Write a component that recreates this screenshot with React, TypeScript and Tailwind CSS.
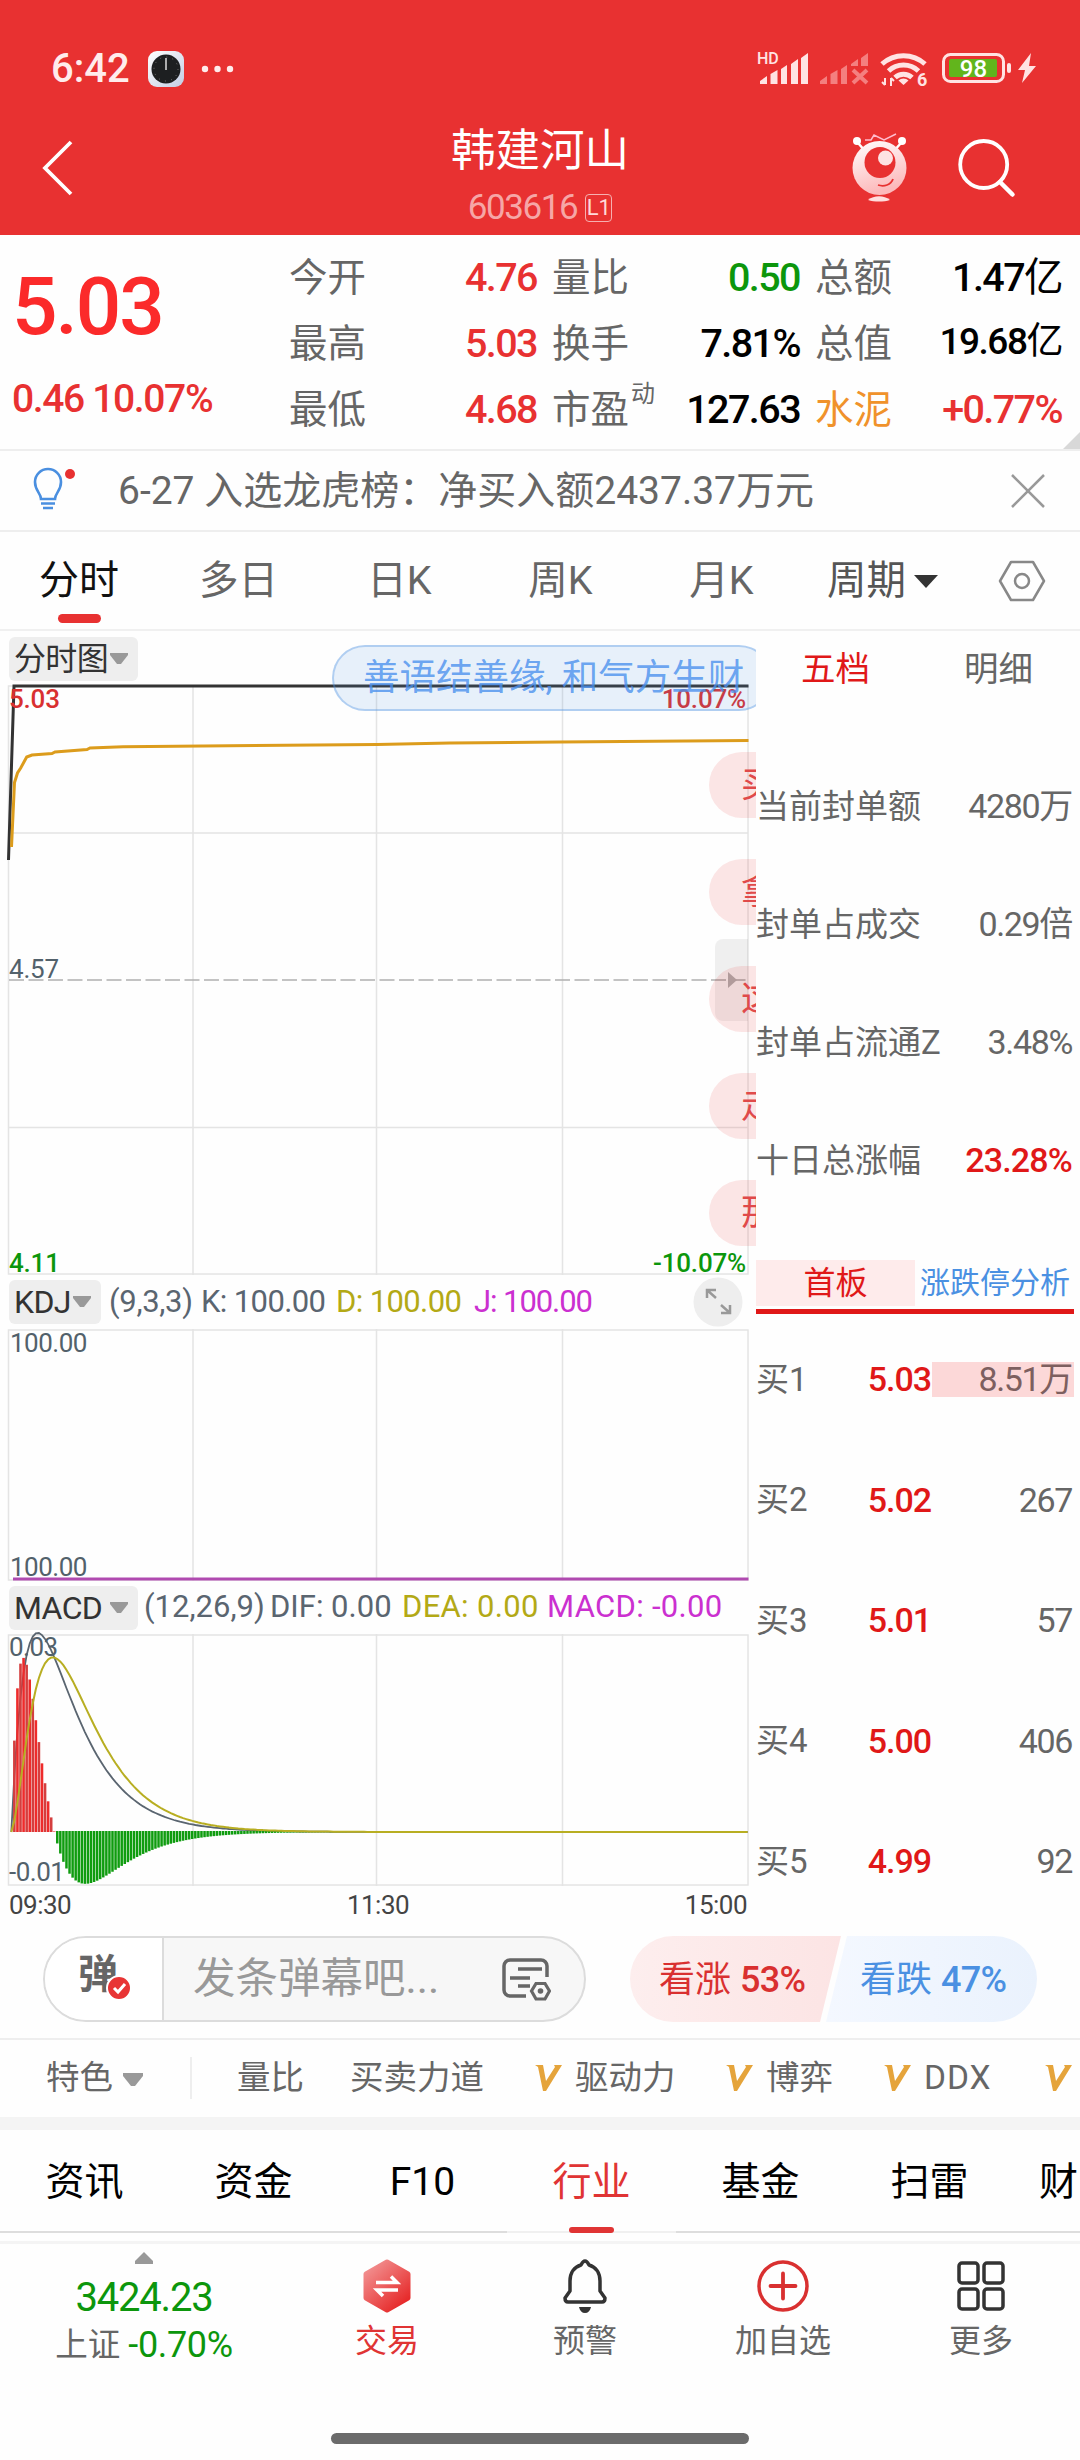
import type { ReactNode } from 'react';

const GREY = '#5a6570';
const OLIVE = '#b3a916';
const MAGENTA = '#cb30d0';

const quoteRows = [
  [
    { label: '今开', value: '4.76', color: 'text-[#e83131]' },
    { label: '量比', value: '0.50', color: 'text-[#0c960c]' },
    { label: '总额', value: '1.47亿', color: 'text-black' },
  ],
  [
    { label: '最高', value: '5.03', color: 'text-[#e83131]' },
    { label: '换手', value: '7.81%', color: 'text-black' },
    { label: '总值', value: '19.68亿', color: 'text-black', small: true },
  ],
  [
    { label: '最低', value: '4.68', color: 'text-[#e83131]' },
    { label: '市盈', sup: '动', value: '127.63', color: 'text-black' },
    { label: '水泥', value: '+0.77%', color: 'text-[#e83131]', accent: true },
  ],
];

const sealRows = [
  { label: '当前封单额', value: '4280万' },
  { label: '封单占成交', value: '0.29倍' },
  { label: '封单占流通Z', value: '3.48%' },
  { label: '十日总涨幅', value: '23.28%', hot: true },
];

const bids = [
  { label: '买1', price: '5.03', volume: '8.51万', filled: true },
  { label: '买2', price: '5.02', volume: '267' },
  { label: '买3', price: '5.01', volume: '57' },
  { label: '买4', price: '5.00', volume: '406' },
  { label: '买5', price: '4.99', volume: '92' },
];

const infoTabs = ['资讯', '资金', 'F10', '行业', '基金', '扫雷'];
const bubbles = ['买', '拿', '这', '走', '那'];

// One jump at the open, flat at the limit price afterwards
const macd = (() => {
  const out: { dif: number; dea: number; bar: number }[] = [];
  let dea = 0;
  for (let n = 0; n < 241; n++) {
    const dif = Math.pow(25 / 27, n) - Math.pow(11 / 13, n);
    dea = n === 0 ? 0 : dea * 0.8 + dif * 0.2;
    out.push({ dif, dea, bar: 2 * (dif - dea) });
  }
  return out;
})();

const barX = (n: number) => 11.3 + n * 3.068;
const macdLine = (key: 'dif' | 'dea') =>
  macd.map((m, n) => `${barX(n).toFixed(1)},${(198 - m[key] * 716).toFixed(1)}`).join(' ');

function StatusBar() {
  return (
    <div className="flex h-[110px] items-start justify-between pl-[51px] pr-5">
      <div className="flex items-center pt-[49px] text-[#ffecec]">
        <span className="w-[97px] text-[40px] leading-10 font-medium">6:42</span>
        <svg width="90" height="40" viewBox="0 0 90 40">
          <defs>
            <linearGradient id="clock" x1="0" y1="0" x2="1" y2="1">
              <stop offset="0" stopColor="#fff" />
              <stop offset="1" stopColor="#c3cde4" />
            </linearGradient>
          </defs>
          <rect x="0" y="2" width="36" height="36" rx="9" fill="url(#clock)" />
          <circle cx="18" cy="20" r="14.5" fill="#1d1f21" />
          <circle cx="18" cy="20" r="12" fill="none" stroke="#777" strokeWidth="1" strokeDasharray="1 5.28" />
          <path d="M18 9v12" stroke="#ddd" strokeWidth="1.5" />
          <circle cx="57" cy="20" r="3.2" fill="#ffecec" />
          <circle cx="69.500" cy="20" r="3.2" fill="#ffecec" />
          <circle cx="82" cy="20" r="3.2" fill="#ffecec" />
        </svg>
      </div>
      <svg width="320" height="60" viewBox="0 0 320 60" className="mt-10" fill="#ffe3e3">
        <text x="17" y="24" fontSize="16" fontWeight="500">HD</text>
        <path d="M20 44v-3l7-5v8zM30.500 44v-10l7-4v14zM41 44v-15l6-4v19zM51 44v-20l7-5v25zM61 44v-26l7-5v31z" />
        <g fill="#f47f7f">
          <path d="M80 44v-3l7-5v8zM90.500 44v-10l7-4v14zM101 44v-15l6-4v19zM111 26v-2l7-5v7zM121 26v-8l7-5v13z" />
          <path d="M113 30l14 13M127 30l-14 13" stroke="#f47f7f" strokeWidth="4" />
        </g>
        <g fill="none" stroke="#ffe3e3" strokeWidth="5">
          <path d="M142 24a32 32 0 0 1 43 0" />
          <path d="M148.500 31a22 22 0 0 1 30 0" />
          <path d="M155 37.500a12.500 12.500 0 0 1 17 0" />
        </g>
        <path d="M158.500 40.500a7 7 0 0 1 10 0l-5 4.500z" />
        <path d="M145 38v7m-3-3l3 3M151 46v-8m3 3l-3-3" stroke="#ffe3e3" strokeWidth="2" fill="none" />
        <text x="177" y="46" fontSize="18" fontWeight="700">6</text>
        <rect x="203.500" y="14.500" width="60" height="27" rx="7" fill="none" stroke="#ffe3e3" strokeWidth="3" />
        <rect x="209" y="19" width="48" height="18" rx="2" fill="#62b51c" />
        <text x="233.500" y="37" fontSize="24" fontWeight="500" textAnchor="middle" fill="#fff">98</text>
        <rect x="267" y="23" width="4" height="10" rx="2" />
        <path d="M291 13l-13 17h7l-3 13 14-17h-7z" />
      </svg>
    </div>
  );
}

function Header() {
  return (
    <header className="h-[235px] bg-[#e83131] text-white">
      <StatusBar />
      <div className="grid h-[125px] grid-cols-[1fr_auto_1fr] items-start">
        <svg width="40" height="64" viewBox="0 0 40 64" className="ml-[39px] mt-[26px]">
          <path d="M32 6L6 32l26 26" fill="none" stroke="#fff" strokeWidth="3.800" />
        </svg>
        <div className="flex flex-col items-center">
          <h1 className="mt-[17px] text-[44.500px] leading-[48px]">韩建河山</h1>
          <div className="mt-[15px] flex items-center gap-2 text-[#f6a6a6]">
            <span className="text-[35px] leading-9 tracking-[-0.04em]">603616</span>
            <span className="flex h-[28px] w-[27px] items-center justify-center rounded-sm border border-[#f6b0b0] text-[22px] leading-none text-[#ffdada]">
              L1
            </span>
          </div>
        </div>
        <div className="flex justify-end">
          <svg width="180" height="90" viewBox="850 130 180 90" className="mr-[50px] mt-[20px]">
            <defs>
              <linearGradient id="bot" x1="0" y1="0" x2="0.300" y2="1">
                <stop offset="0" stopColor="#fff" />
                <stop offset="1" stopColor="#fcb9bb" />
              </linearGradient>
            </defs>
            <g stroke="#fff" fill="none">
              <path d="M858 143l8 9M901 143l-8 9" strokeWidth="2.500" />
              <path d="M865 140h6l3-5 10 5 12-6" strokeWidth="1.500" stroke="#fbc" />
            </g>
            <circle cx="857" cy="141" r="4" fill="#fff" />
            <circle cx="902" cy="141" r="4" fill="#fff" />
            <circle cx="879.500" cy="168" r="27" fill="url(#bot)" />
            <circle cx="880" cy="162.500" r="15.500" fill="#e83131" />
            <circle cx="885.500" cy="158" r="7.500" fill="#fde3e3" />
            <path d="M878 185c6 2 13 0 15-6" fill="none" stroke="#e83131" strokeWidth="1.800" />
            <path d="M868 200c6-5 16-5 22 0-6 2-16 2-22 0z" fill="#fdd" />
            <circle cx="983.700" cy="164.500" r="23.500" fill="none" stroke="#fff" strokeWidth="3.800" />
            <path d="M1000 182l12.500 12.500" stroke="#fff" strokeWidth="4.500" strokeLinecap="round" />
          </svg>
        </div>
      </div>
    </header>
  );
}

function Quote() {
  return (
    <section className="relative flex h-[216px] border-b-2 border-[#eee]">
      <div className="w-[289px] shrink-0 pl-3">
        <p className="mt-[32px] text-[80px] leading-[80px] font-medium tracking-[-0.025em] text-[#fb2a2a]">5.03</p>
        <p className="mt-[32px] text-[39px] leading-10 font-medium tracking-[-0.035em] text-[#e83131]">0.46 10.07%</p>
      </div>
      <div className="mt-[10px] flex flex-col">
        {quoteRows.map((row, i) => (
          <div key={i} className="grid h-[66px] grid-cols-[248px_248px_247px] items-center gap-x-[15px]">
            {row.map((cell) => (
              <div key={cell.label} className="flex items-center justify-between">
                <span
                  className={`relative text-[38.500px] leading-[66px] ${cell.accent ? 'text-[#f0922b]' : 'text-[#666]'}`}
                >
                  {cell.label}
                  {cell.sup && (
                    <span className="absolute left-[79px] top-[5px] text-[24px] leading-6">{cell.sup}</span>
                  )}
                </span>
                <span
                  className={`font-medium tracking-[-0.04em] leading-[66px] ${cell.color} ${
                    cell.small ? '-mt-1 text-[37px]' : 'text-[39.500px]'
                  }`}
                >
                  {cell.value.replace('亿', '')}
                  {cell.value.endsWith('亿') && <span className="font-normal">亿</span>}
                </span>
              </div>
            ))}
          </div>
        ))}
      </div>
      <svg width="17" height="17" viewBox="0 0 17 17" className="absolute bottom-0 right-0">
        <path d="M17 0v17H0z" fill="#d8d8d8" />
      </svg>
    </section>
  );
}

function Notice() {
  return (
    <section className="flex h-[81px] items-center border-b-2 border-[#eee] text-[#666]">
      <svg width="50" height="50" viewBox="0 0 50 50" className="ml-[30px] mr-[38px]">
        <g fill="none" stroke="#4a8fe0" strokeWidth="2.600">
          <path d="M11 33c0-6-6-8-6-17a13 13 0 0 1 26 0c0 9-6 11-6 17z" />
          <path d="M11 37.500h14M13 42h10" />
        </g>
        <circle cx="40" cy="8" r="5" fill="#e83131" />
      </svg>
      <p className="flex-1 text-[39px] leading-[60px]">6-27 入选龙虎榜：净买入额2437.37万元</p>
      <svg width="36" height="36" viewBox="0 0 36 36" className="mr-[34px]">
        <path d="M2 2l32 32M34 2L2 34" stroke="#999" strokeWidth="2.500" />
      </svg>
    </section>
  );
}

function PeriodTabs() {
  return (
    <nav className="flex h-[99px] items-center border-b-2 border-[#f0f0f0] text-[39.500px] text-[#666]">
      <div className="relative flex h-full w-[158px] items-center justify-center text-[40px] text-[#111]">
        分时
        <span className="absolute bottom-[6px] h-[9px] w-[43px] rounded-full bg-[#e83131]" />
      </div>
      {['多日', '日K', '周K', '月K'].map((tab) => (
        <div key={tab} className="w-[161px] text-center">{tab}</div>
      ))}
      <div className="flex items-center gap-2 pl-[25px] text-[#555]">
        周期
        <svg width="24" height="14" viewBox="0 0 24 14"><path d="M0 1h24L12 14z" fill="#333" /></svg>
      </div>
      <svg width="48" height="48" viewBox="0 0 48 48" className="ml-auto mr-[34px]">
        <path d="M13 5h22l11 19-11 19H13L2 24z" fill="none" stroke="#888" strokeWidth="2.500" strokeLinejoin="round" />
        <circle cx="24" cy="24" r="7" fill="none" stroke="#888" strokeWidth="2.500" />
      </svg>
    </nav>
  );
}

function Picker({ children, width }: { children: ReactNode; width: string }) {
  return (
    <div className={`flex h-[44px] shrink-0 items-center justify-between rounded-md bg-[#eee] pl-[5px] pr-[9px] text-[32px] leading-none text-[#333] ${width}`}>
      <span className="whitespace-nowrap tracking-[-0.02em]">{children}</span>
      <svg width="20" height="12" viewBox="0 0 20 12"><path d="M1 0h18v2l-7 9h-4L1 2z" fill="#999" /></svg>
    </div>
  );
}

function Grid({ height }: { height: number }) {
  return (
    <g stroke="#e4e4e4" strokeWidth="1.500" fill="none">
      <rect x="8.500" y="1" width="739.500" height={height - 2} />
      <path d={`M193 0V${height}M376.500 0V${height}M562.500 0V${height}`} />
    </g>
  );
}

function PriceChart() {
  return (
    <svg width="756" height="590" viewBox="0 0 756 590" className="block overflow-visible" fontSize="26" letterSpacing="-0.2">
      <Grid height={590} />
      <path d="M9 148h739M9 442.500h739" stroke="#e4e4e4" strokeWidth="1.500" />
      <path d="M9 295h739" stroke="#b0b0b0" strokeWidth="1.500" strokeDasharray="15 4.500" />
      <path d="M8.500 175L14 1H748.500" fill="none" stroke="#333" strokeWidth="3" />
      <polyline
        points="11.500,162 14.500,97.500 17.500,88 20.700,83 26.700,72 32,70 52,68.500 55,67 87,64.500 90,63 123,61.800 377,59.500 450,58 560,57 748.500,55.500"
        fill="none"
        stroke="#dc9c1c"
        strokeWidth="3"
      />
      <g fontWeight="500">
        <text x="9" y="23" fill="#d93030">5.03</text>
        <text x="746" y="23" textAnchor="end" fill="#d93030">10.07%</text>
        <text x="9" y="293" fill="#52616b" fontWeight="400">4.57</text>
        <text x="9" y="587" fill="#0c960c">4.11</text>
        <text x="746" y="587" textAnchor="end" fill="#0c960c">-10.07%</text>
      </g>
    </svg>
  );
}

function MacdChart() {
  return (
    <svg width="756" height="252" viewBox="0 0 756 252" className="block overflow-visible" fontSize="26" letterSpacing="-0.5">
      <Grid height={252} />
      <polyline points={macdLine('dif')} fill="none" stroke="#5a6570" strokeWidth="1.800" />
      <text x="9" y="22" fill="#52616b">0.03</text>
      {macd.slice(1, 110).map(({ bar }, i) => {
        const height = Math.abs(bar) * 716;
        return bar > 0 ? (
          <rect key={i} x={barX(i + 1) - 1.3} y={198 - height} width="2.600" height={height} fill={i % 2 ? '#ee2b2b' : '#d43e3e'} />
        ) : (
          <rect key={i} x={barX(i + 1) - 1.3} y={197} width="2.500" height={height + 1} fill="#0f9c0f" />
        );
      })}
      <polyline points={macdLine('dea')} fill="none" stroke="#b8ae22" strokeWidth="2" />
      <text x="9" y="247" fill="#52616b">-0.01</text>
    </svg>
  );
}

function Charts() {
  return (
    <div className="relative w-[756px] shrink-0 overflow-hidden">
      <div className="flex h-[54px] items-start pl-[9px] pt-[6px]">
        <Picker width="w-[129px]">分时图</Picker>
      </div>
      <PriceChart />

      <div className="flex h-[54px] items-center pl-[9px] text-[31px] whitespace-nowrap">
        <Picker width="w-[92px]">KDJ</Picker>
        <div className="flex flex-1 pl-2" style={{ color: GREY }}>
          <span className="w-[92px] tracking-[-0.01em]">(9,3,3)</span>
          <span className="w-[135px] tracking-[-0.02em]">K: 100.00</span>
          <span className="w-[138px] tracking-[-0.02em]" style={{ color: OLIVE }}>D: 100.00</span>
          <span className="tracking-[-0.035em]" style={{ color: MAGENTA }}>J: 100.00</span>
        </div>
        <svg width="50" height="50" viewBox="0 0 50 50" className="mr-[13px]">
          <circle cx="25" cy="25" r="24.500" fill="#eee" />
          <path d="M14 21v-8h9M14 13l9 8M37 28v8h-9M37 36l-9-8" fill="none" stroke="#999" strokeWidth="2.500" />
        </svg>
      </div>
      <svg width="756" height="252" viewBox="0 0 756 252" className="block" fontSize="26" letterSpacing="-0.5">
        <Grid height={252} />
        <path d="M13 250h735.500" stroke="#b04ab0" strokeWidth="3" />
        <text x="10" y="23" fill="#52616b">100.00</text>
        <text x="10" y="247" fill="#52616b">100.00</text>
      </svg>

      <div className="flex h-[53px] items-center pl-[9px] text-[31px] whitespace-nowrap">
        <Picker width="w-[129px]">MACD</Picker>
        <div className="flex flex-1 pl-[6px]" style={{ color: GREY }}>
          <span className="w-[126px]">(12,26,9)</span>
          <span className="w-[132px]">DIF: 0.00</span>
          <span className="w-[145px] tracking-[0.01em]" style={{ color: OLIVE }}>DEA: 0.00</span>
          <span className="tracking-[0.01em]" style={{ color: MAGENTA }}>MACD: -0.00</span>
        </div>
      </div>
      <MacdChart />
      <div className="grid grid-cols-3 pl-[9px] pr-[9px] pt-[4px] text-[26px] leading-[30px] tracking-[-0.02em] text-[#444]">
        <span>09:30</span>
        <span className="text-center">11:30</span>
        <span className="text-right">15:00</span>
      </div>

      {/* Floating comments over the chart */}
      <div className="absolute left-[332px] top-[14px] flex h-[66px] w-[440px] items-center rounded-[33px] border-2 border-[#4a90e2]/35 bg-[#4a90e2]/13 pl-[29px] text-[36.500px] leading-none whitespace-nowrap text-[#4a90ee]/80">
        善语结善缘, 和气方生财
      </div>
      <div className="absolute left-[715px] top-[308px] flex h-[82px] w-[33px] items-center rounded-l-lg bg-black/6 pl-[13px]">
        <svg width="10" height="16" viewBox="0 0 10 16"><path d="M0 0l9 8-9 8z" fill="#aaa" /></svg>
      </div>
      <div className="absolute left-[709px] top-[121px] flex flex-col gap-[41px]">
        {bubbles.map((text) => (
          <div key={text} className="flex h-[66px] w-[100px] items-center rounded-full bg-[#e83131]/12 pl-[32px] text-[35px] leading-none text-[#e04a4a]">
            {text}
          </div>
        ))}
      </div>
    </div>
  );
}

function OrderBook() {
  return (
    <div className="flex-1 text-[33px] leading-none text-[#666]">
      <div className="flex h-[116px] items-start pt-[19px] text-[34.500px] leading-[38px]">
        <span className="w-[162px] pl-[45px] text-[#e01818]">五档</span>
        <span className="pl-[46px]">明细</span>
      </div>
      {sealRows.map((row) => (
        <div key={row.label} className="flex h-[118px] items-center justify-between pr-[8px]">
          <span>{row.label}</span>
          <span className={`text-[34px] tracking-[-0.04em] ${row.hot ? 'font-medium tracking-[-0.025em] text-[#e01818]' : ''}`}>{row.value}</span>
        </div>
      ))}
      <div className="mt-[41px] mr-[6px] flex h-[54px] items-start border-b-[5px] border-[#e01818]">
        <span className="flex h-[46px] w-[159px] items-center justify-center bg-[#feebeb] text-[32px] text-[#e01818]">首板</span>
        <span className="flex h-[46px] flex-1 items-center pl-[5px] text-[30px] whitespace-nowrap text-[#4a90e2]">涨跌停分析</span>
      </div>
      <div className="mt-[5px]">
        {bids.map((bid) => (
          <div key={bid.label} className="flex h-[120.500px] items-center pr-[6px]">
            <span className="w-[91px]">{bid.label}</span>
            <span className="w-[84px] text-right text-[34px] font-medium tracking-[-0.03em] text-[#e01818]">{bid.price}</span>
            <span
              className={`ml-px flex h-[35px] flex-1 items-center justify-end pr-[2px] text-[34px] tracking-[-0.04em] ${
                bid.filled ? 'bg-[#fcd8d8] text-[#7d5f5f]' : ''
              }`}
            >
              {bid.volume}
            </span>
          </div>
        ))}
      </div>
    </div>
  );
}

function CommentBar() {
  return (
    <section className="flex h-[111px] items-start border-b-2 border-[#eee] pt-[7px] pl-[43px]">
      <div className="flex h-[86px] w-[543px] overflow-hidden rounded-full border-[2.500px] border-[#dcdcdc] bg-[#f7f7f7]">
        <div className="relative flex w-[119px] items-center border-r-2 border-[#dcdcdc] bg-white pl-[33px]">
          <span className="-mt-2 text-[40px] leading-none font-bold text-[#666]">弹</span>
          <svg width="26" height="26" viewBox="0 0 26 26" className="absolute left-[61px] top-[37px]">
            <circle cx="13" cy="13" r="12" fill="#e83535" stroke="#fff" strokeWidth="2" />
            <path d="M8 13l4 4 7-8" fill="none" stroke="#fff" strokeWidth="3" />
          </svg>
        </div>
        <span className="flex-1 pl-[29px] text-[42.500px] leading-[82px] text-[#999]">发条弹幕吧...</span>
        <svg width="50" height="44" viewBox="0 0 50 44" className="mr-[33px] mt-[20px]" fill="none" stroke="#666" strokeWidth="3.500">
          <path d="M25 38H9a6 6 0 0 1-6-6V8a6 6 0 0 1 6-6h31a6 6 0 0 1 6 6v11" />
          <path d="M17 11h24M9 20h20M17 28h12" />
          <path d="M35 25.500h9l4.500 7.500-4.500 8h-9L30.500 33z" strokeWidth="3.200" />
          <circle cx="39.500" cy="33" r="2.800" fill="#666" stroke="none" />
        </svg>
      </div>
      <div className="relative ml-[44px] flex h-[86px] w-[408px] text-[36px] leading-[88px]">
        <svg width="408" height="86" viewBox="0 0 408 86" className="absolute inset-0">
          <defs>
            <linearGradient id="bull"><stop offset="0" stopColor="#fdeeee" /><stop offset="1" stopColor="#fce4e4" /></linearGradient>
            <linearGradient id="bear"><stop offset="0" stopColor="#f4f8ff" /><stop offset="1" stopColor="#eaf2fd" /></linearGradient>
          </defs>
          <path d="M43 0h168l-21 86H43a43 43 0 0 1 0-86z" fill="url(#bull)" />
          <path d="M217 0h147a43 43 0 0 1 0 86H196z" fill="url(#bear)" />
        </svg>
        <span className="relative w-[201px] pl-[29px] text-[#d93030]">
          看涨 <span className="font-medium tracking-[-0.02em]">53%</span>
        </span>
        <span className="relative pl-[29px] text-[#4a90e2]">
          看跌 <span className="font-medium tracking-[-0.02em]">47%</span>
        </span>
      </div>
    </section>
  );
}

function VMark() {
  return (
    <svg width="28" height="28" viewBox="0 0 28 28" className="-ml-[2px] mr-[2px] shrink-0">
      <path d="M1 1h8l3 16L21 3l-1-2h8L12 27H9L4 3z" fill="#e5a43b" />
    </svg>
  );
}

function FeatureRow() {
  return (
    <section className="flex h-[77px] items-center overflow-hidden pl-[46px] pb-[2px] text-[33.500px] leading-none whitespace-nowrap text-[#666]">
      <span className="w-[76px]">特色</span>
      <svg width="22" height="14" viewBox="0 0 22 14" className="mt-1"><path d="M1 0h20v3l-8 10h-4L1 3z" fill="#999" /></svg>
      <span className="ml-[46px] mr-[45px] h-[42px] w-[2px] bg-[#eee]" />
      <span className="w-[113px]">量比</span>
      <span className="w-[186px]">买卖力道</span>
      <VMark />
      <span className="w-[163px] pl-[11px]">驱动力</span>
      <VMark />
      <span className="w-[130px] pl-[11px]">博弈</span>
      <VMark />
      <span className="w-[133px] pl-[11px] tracking-[0.03em]">DDX</span>
      <VMark />
    </section>
  );
}

function InfoTabs() {
  return (
    <nav className="flex h-[103px] overflow-hidden text-[39px] text-black">
      {infoTabs.map((tab) => {
        const active = tab === '行业';
        return (
          <div
            key={tab}
            className={`relative flex w-[169px] shrink-0 justify-center border-b-2 pt-[22px] leading-[60px] ${
              active ? 'border-[#f0f0f0] text-[#e03434]' : 'border-[#ddd]'
            }`}
          >
            {tab}
            {active && <span className="absolute -bottom-[2px] h-[6px] w-[45px] rounded-[3px] bg-[#e03434]" />}
          </div>
        );
      })}
      <div className="flex-1 border-b-2 border-[#ddd] pl-[25px] pt-[22px] leading-[60px]">财</div>
    </nav>
  );
}

function NavItem({ label, active, children }: { label: string; active?: boolean; children: ReactNode }) {
  return (
    <div className={`flex w-[198px] flex-col items-center pt-[14px] text-[32px] leading-[40px] ${active ? 'text-[#e03434]' : 'text-[#666]'}`}>
      <svg width="56" height="56" viewBox="0 0 56 56" fill="none">{children}</svg>
      <span className="mt-[7px]">{label}</span>
    </div>
  );
}

function BottomNav() {
  return (
    <nav className="flex h-[192px] border-t-[3px] border-[#f4f4f4]">
      <div className="flex w-[288px] flex-col items-center text-[#0c960c]">
        <svg width="20" height="12" viewBox="0 0 20 12" className="mt-[8px]"><path d="M10 0l9 9v3H1V9z" fill="#999" /></svg>
        <span className="mt-[14px] text-[40px] leading-10 tracking-[-0.03em]">3424.23</span>
        <span className="mt-[7px] flex items-center gap-2 text-[36px] leading-10 tracking-[-0.01em]">
          <span className="text-[32.500px] tracking-normal text-[#666]">上证</span>-0.70%
        </span>
      </div>
      <NavItem label="交易" active>
        <defs>
          <linearGradient id="trade" x1="0" y1="0" x2="0.800" y2="1">
            <stop offset="0" stopColor="#f39a9a" />
            <stop offset="1" stopColor="#e62626" />
          </linearGradient>
        </defs>
        <path d="M28 4l21 12v24L28 52 7 40V16z" fill="url(#trade)" stroke="url(#trade)" strokeWidth="5" strokeLinejoin="round" />
        <path d="M17 24.500h21l-6-6M39 32H18l6 6" stroke="#fff" strokeWidth="3.500" />
      </NavItem>
      <NavItem label="预警">
        <g stroke="#333" strokeWidth="3.500" strokeLinejoin="round">
          <path d="M28 3c-2 0-3 2-4 4-7 2-11 8-11 16v10l-5 7c0 3 1 4 3 4h34c2 0 3-1 3-4l-5-7V23c0-8-4-14-11-16-1-2-2-4-4-4z" />
        </g>
        <path d="M22 49h12c-1 4-3 6-6 6s-5-2-6-6z" fill="#333" />
      </NavItem>
      <NavItem label="加自选">
        <circle cx="28" cy="28" r="24" stroke="#d93030" strokeWidth="3.500" />
        <path d="M28 15.500v25M15.500 28h25" stroke="#d93030" strokeWidth="3.800" strokeLinecap="round" />
      </NavItem>
      <NavItem label="更多">
        <g stroke="#333" strokeWidth="3.500">
          <rect x="6" y="5" width="19" height="20" rx="3" />
          <rect x="31" y="5" width="19" height="20" rx="3" />
          <rect x="6" y="31" width="19" height="20" rx="3" />
          <rect x="31" y="31" width="19" height="20" rx="3" />
        </g>
      </NavItem>
    </nav>
  );
}

export default function App() {
  return (
    <div className="h-[2460px] w-[1080px] overflow-hidden bg-[#fefefe] font-[Roboto,'Noto_Sans_CJK_SC',sans-serif]">
      <Header />
      <Quote />
      <Notice />
      <PeriodTabs />
      <main className="flex h-[1298px]">
        <Charts />
        <OrderBook />
      </main>
      <CommentBar />
      <FeatureRow />
      <div className="h-[13px] bg-[#f4f4f4]" />
      <InfoTabs />
      <div className="h-[8px]" />
      <BottomNav />
      <div className="mx-auto h-[11px] w-[418px] rounded-full bg-[#6b6b6b]" />
    </div>
  );
}
